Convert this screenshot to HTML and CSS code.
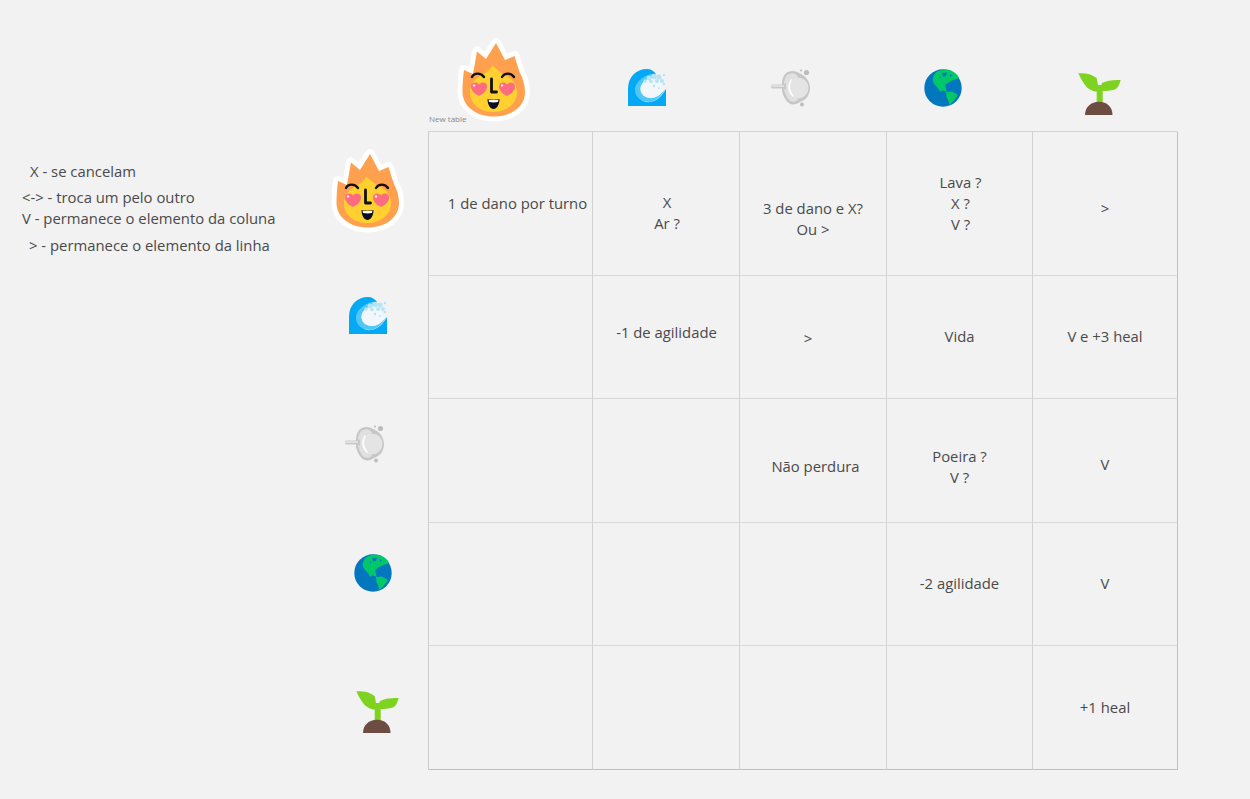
FILE: index.html
```html
<!DOCTYPE html>
<html lang="pt">
<head>
<meta charset="utf-8">
<title>Tabela de elementos</title>
<link rel="stylesheet" href="styles.css">
</head>
<body>
<svg class="defs" width="0" height="0" aria-hidden="true">
  <symbol id="fire" viewBox="0 0 72 84" overflow="visible">
    <path d="M38 6 L47 23 L56.500 19 L61.500 35 C65 41 67 48 67 55 C67 70 53 79.500 36 79.500 C18 79.500 4.500 69 4.500 55 C4.500 47 5 40 6 33 L15 37 L19 14.500 L28 22 Z" fill="#ffa04f" stroke="#fff" stroke-width="10" stroke-linejoin="round" paint-order="stroke"/>
    <path d="M34.500 28.500 C38 32 42 35 46 38 C54 41 59 47 59 55 C59 67 48 75 35.500 75 C22 75 12 67 12 55 C12 47 17 41 24 38 C28 36 32 33 34.500 28.500 Z" fill="#ffd030"/>
    <path d="M14 40 C16 35.500 23 35.500 26 40 M44 40 C46.500 35.500 53 35.500 56 40" fill="none" stroke="#111" stroke-width="2.400" stroke-linecap="round"/>
    <path d="M21 59 C15 56 13 52.500 13 49.500 C13 45.500 18 44 21 47.500 C24 44 29 45.500 29 49.500 C29 52.500 27 56 21 59 Z" fill="#ff6b81"/>
    <path d="M49 59 C43 56 41 52.500 41 49.500 C41 45.500 46 44 49 47.500 C52 44 57 45.500 57 49.500 C57 52.500 55 56 49 59 Z" fill="#ff6b81"/>
    <circle cx="16" cy="48.500" r="1.200" fill="#ffe3e6"/>
    <circle cx="44" cy="48.500" r="1.200" fill="#ffe3e6"/>
    <path d="M33.500 42 V55 H38.500" fill="none" stroke="#111" stroke-width="2.800" stroke-linecap="round" stroke-linejoin="round"/>
    <path d="M29.500 62 C33 63 38 63 41.500 62 C41.500 68 38.500 72 35.500 72 C32.500 72 29.500 68 29.500 62 Z" fill="#0b0b1e"/>
    <path d="M30.500 62.500 C33 63.300 38 63.300 40.500 62.500 L40 65 C37 65.600 34 65.600 31 65 Z" fill="#fff"/>
  </symbol>
  <symbol id="wave" viewBox="0 0 38 38">
    <path d="M0 37 V20 C0 8 8 0 19 0 C23 0 26 2 28 5 C20 4 9 11 9 21 C9 29 15 34 22 33 C29 32 34 27 38 20 V37 Z" fill="#03a9f4"/>
    <path d="M28 5 C20 4 7 11 7 21 C7 29 14 33 22 33 C28 32 33 27 38 20 C33 25 28 29 23 29 C17 29 12.500 25 12.500 20 C12.500 14 18 10 24 9 Z" fill="#4fc8f7"/>
    <path d="M12.500 20 C12.500 14 18 10 24 9 C30 9 34 14 35 22 C32 26 28 29 23 29 C17 29 12.500 25 12.500 20 Z" fill="#f1f7fa"/>
    <g fill="#b5e4f6">
      <circle cx="17" cy="12" r="1.800"/>
      <circle cx="21" cy="9" r="2.500"/>
      <circle cx="26" cy="7.500" r="2.800"/>
      <circle cx="31" cy="8" r="2.500"/>
      <circle cx="34" cy="12" r="2"/>
      <circle cx="29" cy="12" r="2"/>
      <circle cx="23" cy="12.500" r="1.800"/>
      <circle cx="36" cy="6" r="1.200"/>
      <circle cx="36" cy="15" r="1.200"/>
      <circle cx="26" cy="17" r="1.200"/>
      <circle cx="31" cy="19" r="1"/>
    </g>
  </symbol>
  <symbol id="smoke" viewBox="0 0 40 38">
    <path d="M11 13 C12 8 13 5 17 3 C21 1 25 2 28 4 C34 6 39 12 39 19 C39 26 35 31 29 33 C24 37 18 36 15 31 C13 28 12 26 11 22 Z" fill="#c6c6c6"/>
    <path d="M13 14 C14 9 15 6 18 5 C22 3 26 5 27 8 C22 14 22 25 27 31 C23 34 19 33 17 30 C15 27 14 24 13 21 Z" fill="#e0e0e0"/>
    <path d="M1 15.500 H12 L15 14 V21 L12 19.500 H1 C0 19.500 0 15.500 1 15.500 Z" fill="#c9c9c9"/>
    <path d="M1 17 H13" stroke="#efefef" stroke-width="1.200"/>
    <circle cx="27" cy="19" r="10.500" fill="#e4e4e4"/>
    <path d="M20 11 C17 17 18 23 22 27" fill="none" stroke="#fff" stroke-width="1.600" stroke-linecap="round"/>
    <circle cx="35.500" cy="3.500" r="2.600" fill="#bdbdbd"/>
    <circle cx="30" cy="1.500" r="1.100" fill="#bdbdbd"/>
    <circle cx="31" cy="35.500" r="1.900" fill="#bdbdbd"/>
  </symbol>
  <symbol id="globe" viewBox="0 0 38 38">
    <circle cx="19" cy="19" r="18.700" fill="#0277bd"/>
    <path d="M8.700 11 C9 7 10.500 4.500 12.700 2.700 C17 .500 22 .300 26 1 C30 2.500 33.500 5.500 35.300 9.300 L29.300 11 L25 13 L21 16 L22.700 22.700 L18.500 21.500 L16 22.700 C15 20 13 18 11 16 C9.500 14.500 9 13 8.700 11 Z" fill="#00c767"/>
    <path d="M18 4 L23 3.500 L22 7 L19 7.500 Z M15 8 L17 7.500 L17 9.500 Z M26 5 L28 6.500 L26 8 Z" fill="#0277bd"/>
    <path d="M22 23 L28 22.500 L34 26 L30 31.500 L25.500 36 L24 31 L22.500 28 Z" fill="#00c767"/>
  </symbol>
  <symbol id="sprout" viewBox="0 0 43 42">
    <path d="M18.700 12 H24.700 V30 H18.700 Z" fill="#7ed321"/>
    <path d="M.300 .300 C7 0 14 1 18.700 5.300 L20 12 L20 18.700 C14 18.500 10 16 7 12 C4 8 2 4 .300 .300 Z" fill="#7ed321"/>
    <path d="M42.700 7 C37 7 29 7 23.700 10.300 L23 18 C28 18 33 18 37 16.500 C40 15 41.500 11 42.700 7 Z" fill="#7ed321"/>
    <path d="M7 42 C7 34 13 28.700 21 28.700 C29 28.700 34.500 34 34.500 42 Z" fill="#6d4c41"/>
  </symbol>
</svg>

<main class="board">
  <section class="legend">
    <p class="legend-line line-x">X - se cancelam</p>
    <p class="legend-line line-swap">&lt;-&gt; - troca um pelo outro</p>
    <p class="legend-line line-v">V - permanece o elemento da coluna</p>
    <p class="legend-line line-gt">&gt; - permanece o elemento da linha</p>
  </section>

  <svg class="sticker fire head-fire"><use href="#fire"/></svg>
  <svg class="sticker wave head-wave"><use href="#wave"/></svg>
  <svg class="sticker smoke head-smoke"><use href="#smoke"/></svg>
  <svg class="sticker globe head-globe"><use href="#globe"/></svg>
  <svg class="sticker sprout head-sprout"><use href="#sprout"/></svg>

  <svg class="sticker fire side-fire"><use href="#fire"/></svg>
  <svg class="sticker wave side-wave"><use href="#wave"/></svg>
  <svg class="sticker smoke side-smoke"><use href="#smoke"/></svg>
  <svg class="sticker globe side-globe"><use href="#globe"/></svg>
  <svg class="sticker sprout side-sprout"><use href="#sprout"/></svg>

  <span class="table-name">New table</span>

  <div class="table">
    <div class="cell nudge-r15">1 de dano por turno</div>
    <div class="cell nudge-d21">X<br>Ar ?</div>
    <div class="cell nudge-d30">3 de dano e X?<br>Ou &gt;</div>
    <div class="cell nudge-lava">Lava ?<br>X ?<br>V ?</div>
    <div class="cell nudge-d10">&gt;</div>

    <div class="cell"></div>
    <div class="cell nudge-u7">-1 de agilidade</div>
    <div class="cell nudge-gt">&gt;</div>
    <div class="cell lift">Vida</div>
    <div class="cell lift">V e +3 heal</div>

    <div class="cell"></div>
    <div class="cell"></div>
    <div class="cell nudge-perdura">Não perdura</div>
    <div class="cell nudge-d12">Poeira ?<br>V ?</div>
    <div class="cell nudge-d8">V</div>

    <div class="cell"></div>
    <div class="cell"></div>
    <div class="cell"></div>
    <div class="cell lift">-2 agilidade</div>
    <div class="cell lift">V</div>

    <div class="cell"></div>
    <div class="cell"></div>
    <div class="cell"></div>
    <div class="cell"></div>
    <div class="cell">+1 heal</div>
  </div>
</main>
</body>
</html>
```

FILE: styles.css
```css
* {
  box-sizing: border-box;
}

html,
body {
  margin: 0;
  height: 100%;
  overflow: hidden;
}

body {
  background: #f2f2f2;
  color: #4a4a4a;
  font-family: "Open Sans", "Liberation Sans", sans-serif;
  font-size: 14.85px;
  line-height: 21px;
}

.defs {
  position: absolute;
}

.board {
  position: relative;
  width: 1250px;
  height: 799px;
  padding: 131px 0 0 428px;
}

/* legend note on the canvas */
.legend {
  position: absolute;
  left: 22px;
  top: 161px;
}

.legend-line {
  margin: 0;
  white-space: nowrap;
}

.line-x {
  padding-left: 8px;
}

.line-swap {
  margin-top: 5px;
}

.line-gt {
  margin-top: 6px;
  padding-left: 7px;
}

/* stickers on the canvas */
.sticker {
  position: absolute;
  display: block;
  overflow: visible;
}

.fire {
  width: 72px;
  height: 84px;
}

.wave {
  width: 38px;
  height: 38px;
}

.smoke {
  width: 40px;
  height: 38px;
}

.globe {
  width: 38px;
  height: 38px;
}

.sprout {
  width: 43px;
  height: 42px;
}

.head-fire { left: 458px; top: 37px; }
.head-wave { left: 628px; top: 69px; }
.head-smoke { left: 771px; top: 69px; }
.head-globe { left: 924px; top: 69px; }
.head-sprout { left: 1078px; top: 73px; }

.side-fire { left: 332px; top: 148px; }
.side-wave { left: 349px; top: 297px; }
.side-smoke { left: 345px; top: 425px; }
.side-globe { left: 354px; top: 554px; }
.side-sprout { left: 356px; top: 691px; }

.table-name {
  position: absolute;
  left: 429px;
  top: 113px;
  font-size: 8px;
  line-height: 11px;
  color: #888;
}

/* table */
.table {
  display: grid;
  grid-template-columns: 164px 147px 147px 146px 145px;
  grid-template-rows: 144px 123px 124px 123px 124px;
  width: 750px;
  border-top: 1px solid #d4d4d4;
  border-left: 1px solid #cccccc;
}

.cell {
  display: flex;
  align-items: center;
  justify-content: center;
  text-align: center;
  border-right: 1px solid #d2d2d2;
  border-bottom: 1px solid #d8d8d8;
}

.cell:nth-child(5n) {
  border-right-color: #c0c0c0;
}

.cell:nth-last-child(-n+5) {
  border-bottom-color: #c0c0c0;
}

.lift { padding-bottom: 2px; }
.nudge-r15 { padding-left: 14px; }
.nudge-d21 { padding: 18px 0 0 2px; }
.nudge-d30 { padding-top: 30px; }
.nudge-d10 { padding-bottom: 1px; padding-top: 10px; }
.nudge-d8 { padding-top: 8px; }
.nudge-d12 { padding-top: 12px; }
.nudge-u7 { padding: 0 0 9px 1px; }
.nudge-lava { padding-left: 2px; }
.nudge-gt { padding: 3px 10px 0 0; }
.nudge-perdura { padding: 11px 0 0 5px; }
```
